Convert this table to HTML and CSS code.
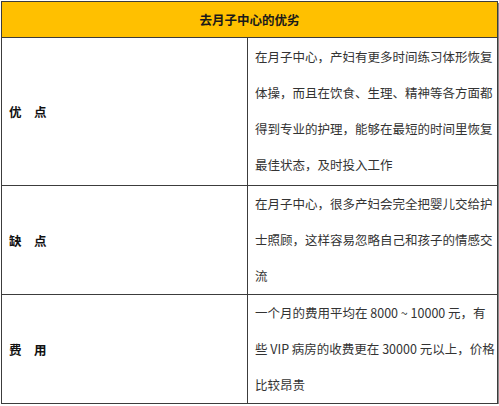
FILE: index.html
```html
<!DOCTYPE html>
<html lang="zh-CN">
<head>
<meta charset="utf-8">
<title>去月子中心的优劣</title>
<link rel="stylesheet" href="styles.css">
</head>
<body>
<table class="grid">
  <colgroup>
    <col class="col-label">
    <col class="col-text">
  </colgroup>
  <thead>
    <tr class="head-row">
      <th colspan="2" class="head">去月子中心的优劣</th>
    </tr>
  </thead>
  <tbody>
    <tr class="row row-pros">
      <td class="label">优　点</td>
      <td class="text">在月子中心，产妇有更多时间练习体形恢复<br>体操，而且在饮食、生理、精神等各方面都<br>得到专业的护理，能够在最短的时间里恢复<br>最佳状态，及时投入工作</td>
    </tr>
    <tr class="row row-cons">
      <td class="label">缺　点</td>
      <td class="text">在月子中心，很多产妇会完全把婴儿交给护<br>士照顾，这样容易忽略自己和孩子的情感交<br>流</td>
    </tr>
    <tr class="row row-cost">
      <td class="label">费　用</td>
      <td class="text">一个月的费用平均在 8000 ~ 10000 元，有<br>些 VIP 病房的收费更在 30000 元以上，价格<br>比较昂贵</td>
    </tr>
  </tbody>
</table>
</body>
</html>
```

FILE: styles.css
```css
html, body {
  margin: 0;
  padding: 0;
  background: #ffffff;
}

body {
  padding: 1px 0 0 1px;
  font-family: "Noto Sans CJK SC", "Microsoft YaHei", sans-serif;
  color: #333333;
}

.grid {
  border-collapse: collapse;
  table-layout: fixed;
  width: 496px;
  box-shadow: 2px 2px 0 #8a8a8a;
}

.col-label { width: 246px; }
.col-text { width: 250px; }

.grid th,
.grid td {
  border: 1px solid #3c3c3c;
  padding: 0;
}

.head {
  background: #ffc000;
  height: 35px;
  font-size: 12.5px;
  font-weight: 700;
  color: #1a1a1a;
  text-align: center;
  vertical-align: middle;
}

.label {
  font-size: 12.5px;
  font-weight: 700;
  color: #111111;
  padding-left: 7px !important;
  vertical-align: middle;
  white-space: nowrap;
}

.text {
  font-size: 12.5px;
  line-height: 36px;
  padding-left: 7px !important;
  vertical-align: top;
  white-space: nowrap;
  color: #333333;
}

.row-pros { height: 148px; }
.row-pros .text { padding-top: 1px !important; }
.row-cons { height: 108px; }
.row-cost { height: 107px; }
```
